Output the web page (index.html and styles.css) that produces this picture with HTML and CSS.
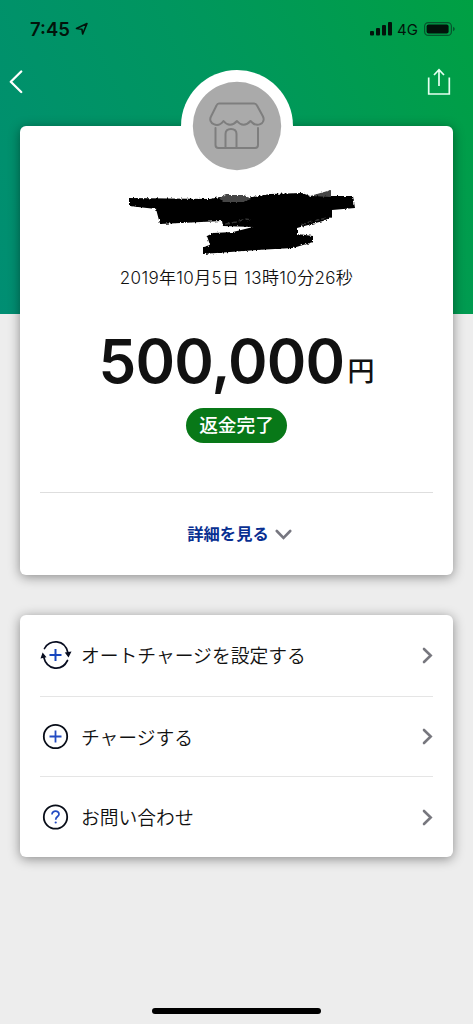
FILE: index.html
```html
<!DOCTYPE html>
<html lang="ja">
<head>
<meta charset="utf-8">
<title>取引詳細</title>
<link rel="stylesheet" href="styles.css">
</head>
<body>
<main class="page">
  <header class="status">
    <span class="time">7:45</span>
    <svg class="location" width="14" height="14" viewBox="0 0 14 14"><path d="M1.500 6.500 12 1.500 7.700 12 6.900 7.200Z" fill="none" stroke="#02140b" stroke-width="1.600" stroke-linejoin="round"/></svg>
    <svg class="signal" width="22" height="14" viewBox="0 0 22 14" fill="#02140b"><rect x="0" y="9" width="4" height="4.5" rx="1"/><rect x="6" y="6" width="4" height="7.5" rx="1"/><rect x="12" y="3" width="4" height="10.5" rx="1"/><rect x="18" y="0" width="4" height="13.5" rx="1"/></svg>
    <span class="network">4G</span>
    <svg class="battery" width="31" height="14" viewBox="0 0 31 14"><rect x=".6" y=".6" width="26.8" height="12.8" rx="3.7" fill="none" stroke="#06552d" stroke-width="1.2"/><rect x="2.6" y="2.6" width="22" height="8.8" rx="2" fill="#02140b"/><path d="M29 4.8q1.8.8 1.8 2.2T29 9.2Z" fill="#06552d"/></svg>
  </header>
  <nav class="nav">
    <svg width="14" height="24" viewBox="0 0 14 24"><path d="M12.2 1.5 1.8 11.8 12.2 22" fill="none" stroke="#fff" stroke-width="2.3" stroke-linecap="round" stroke-linejoin="round"/></svg>
    <svg width="24" height="28" viewBox="0 0 24 28"><path d="M1.7 9.5V26H22.3V9.5M12 18V2M7 7l5-5.3L17 7" fill="none" stroke="#e4fff0" stroke-width="1.7"/></svg>
  </nav>
  <section class="card receipt">
    <div class="avatar">
      <svg width="90" height="90" viewBox="0 0 90 90"><circle cx="45" cy="45" r="44.2" fill="#aaa"/><g fill="none" stroke="#7e7e7e" stroke-width="2" stroke-linejoin="round" stroke-linecap="round"><path d="M27 22.500H62q2 0 3 2l6 11c3 7-6 12-12.500 4.500-4.300 5-9.700 5-13.500 0-4.300 5-9.700 5-13.500 0C25.500 48 15.500 42 19 35.500L24.500 24.500q.800-2 2.500-2Z"/><path d="M23.500 47V64q0 3 3 3H63q3 0 3-3V47M33.500 67V53q0-5 5.500-5t5.500 5V67"/></g></svg>
    </div>
    <svg class="redaction" width="230" height="66" viewBox="0 0 230 66">
      <defs><filter id="brush" x="-5%" y="-10%" width="110%" height="120%"><feTurbulence type="fractalNoise" baseFrequency=".5" numOctaves="2" seed="4"/><feDisplacementMap in="SourceGraphic" scale="3" xChannelSelector="R" yChannelSelector="G"/></filter></defs>
      <g filter="url(#brush)" transform="translate(0 1)">
        <path d="M2 8 83 9 93 7 120 8 143 4 175 3 183 6 226 6 228 18 205 20 205 27 196 31 170 38 170 44 186 46 186 52 166 58 130 60 76 64 76 57 83 55 80 46 86 43 106 42 126 37 96 36 95 31 33 34 29 19 2 16Z" fill="#000"/>
        <path d="M183 6 204 0V7ZM92 8l7-3 18 0 7 4-8 3-20 0Z" fill="#444"/>
        <path d="M98 34l12-2 8-3 7 1M174 35l12-4 14-3" fill="none" stroke="#333" stroke-width="1.500" stroke-dasharray="5 2"/>
      </g>
    </svg>
    <p class="date">2019年10月5日 13時10分26秒</p>
    <p class="amount"><span class="digits">500,000</span><span class="yen">円</span></p>
    <span class="badge">返金完了</span>
    <a class="details"><span>詳細を見る</span><svg width="17" height="11" viewBox="0 0 17 11"><path d="M1.800 2 8.500 8.800 15.200 2" fill="none" stroke="#777780" stroke-width="2.600" stroke-linecap="round"/></svg></a>
  </section>
  <section class="card menu">
    <a class="row">
      <svg class="icon" width="32" height="30" viewBox="0 0 32 30"><g fill="none" stroke="#080d20" stroke-width="1.700" stroke-linecap="round"><path d="M4.500 8.500C9-.700 25-1.500 28 13M3.500 16.500C7 31 22 31.500 27.500 20.500"/></g><path d="M24.800 12.500 31.500 11.500 28.500 17.500ZM.500 18.500 2.600 12.500 6.500 17.200Z" fill="#080d20"/><path d="M15.500 9V21M9.500 15H21.500" stroke="#1746be" stroke-width="2"/></svg>
      <span class="label">オートチャージを設定する</span>
      <svg width="11" height="17" viewBox="0 0 11 17"><path d="M2 2 8.700 8.500 2 15" fill="none" stroke="#77777e" stroke-width="2.600" stroke-linecap="round"/></svg>
    </a>
    <a class="row">
      <svg class="icon" width="32" height="30" viewBox="0 0 32 30"><circle cx="15.500" cy="14.500" r="11.700" fill="none" stroke="#080d18" stroke-width="1.800"/><path d="M15.500 8.500V20.500M9.500 14.500H21.500" stroke="#234bc2" stroke-width="1.800"/></svg>
      <span class="label">チャージする</span>
      <svg width="11" height="17" viewBox="0 0 11 17"><path d="M2 2 8.700 8.500 2 15" fill="none" stroke="#77777e" stroke-width="2.600" stroke-linecap="round"/></svg>
    </a>
    <a class="row">
      <svg class="icon" width="32" height="30" viewBox="0 0 32 30"><circle cx="15.500" cy="15" r="11.700" fill="none" stroke="#080d18" stroke-width="1.800"/><path d="M12 12.500C12 8 19.200 8.300 19 12.300 18.900 14.600 15.700 14.500 15.700 17.700" fill="none" stroke="#234bc2" stroke-width="1.700"/><circle cx="15.700" cy="20.500" r="1.100" fill="#234bc2"/></svg>
      <span class="label">お問い合わせ</span>
      <svg width="11" height="17" viewBox="0 0 11 17"><path d="M2 2 8.700 8.500 2 15" fill="none" stroke="#77777e" stroke-width="2.600" stroke-linecap="round"/></svg>
    </a>
  </section>
  <div class="home-bar"></div>
</main>
</body>
</html>
```
FILE: styles.css
```css
* { box-sizing: border-box; }
body { margin: 0; }
p { margin: 0; }

.page {
  height: 1024px;
  padding: 0 20px;
  display: flex;
  flex-direction: column;
  background: linear-gradient(65deg, #008e73 0%, #00965f 50%, #00a043 100%) 0 0 / 100% 314px no-repeat #ededed;
  font-family: Inter, "Noto Sans CJK JP", sans-serif;
  color: #111;
  overflow: hidden;
}

.status {
  height: 58px;
  padding: 0 0 0 10px;
  margin-right: -2px;
  display: flex;
  align-items: center;
  color: #02140b;
}
.time { font-size: 18.5px; font-weight: 600; width: 45px; white-space: nowrap; }
.signal { margin-left: auto; }
.network { font-size: 15px; margin: 0 6px 0 5px; }

.nav {
  height: 68px;
  margin: 0 2px 0 -11px;
  padding-top: 10px;
  display: flex;
  justify-content: space-between;
  align-items: flex-start;
}
.nav svg:first-child { margin-top: 2px; }

.card {
  background: #fff;
  border-radius: 6px;
  box-shadow: 0 2px 12px rgba(0, 0, 0, .42);
  flex: none;
}

.receipt {
  height: 449px;
  padding: 0 20px;
  display: flex;
  flex-direction: column;
  align-items: center;
}
.avatar {
  width: 112px;
  height: 112px;
  margin-top: -56px;
  padding: 11px;
  border-radius: 50%;
  background: #fff;
  flex: none;
}
.avatar svg { display: block; }
.redaction { margin: 7px 0 0 11px; flex: none; overflow: visible; }
.date {
  margin-top: 10px;
  height: 26px;
  line-height: 26px;
  font-size: 17px;
  font-weight: 350;
  letter-spacing: .33px;
  white-space: nowrap;
}
.amount {
  margin-top: 31px;
  height: 78px;
  display: flex;
  align-items: baseline;
  line-height: 78px;
}
.digits { font-size: 60px; font-weight: 560; letter-spacing: -.8px; }
.yen {
  font-size: 27px;
  font-weight: 500;
  line-height: 30px;
  margin: 0 0 4px 3px;
  align-self: flex-end;
  padding-bottom: 9px;
}
.badge {
  margin-top: 8px;
  width: 101px;
  height: 35px;
  border-radius: 18px;
  background: #087818;
  color: #fff;
  font-size: 18.7px;
  font-weight: 500;
  line-height: 35px;
  text-align: center;
}
.details {
  align-self: stretch;
  margin-top: auto;
  height: 83px;
  padding-left: 6px;
  border-top: 1px solid #dedede;
  display: flex;
  justify-content: center;
  align-items: center;
  gap: 6px;
  font-size: 16.3px;
  font-weight: 700;
  color: #082f91;
}
.details span { padding-bottom: 2px; }

.menu { margin-top: 40px; height: 242px; padding: 0 20px; }
.row { height: 80.7px; display: flex; align-items: center; }
.row + .row { border-top: 1px solid #e5e5e5; }
.icon { margin-right: 9px; }
.label {
  flex: 1;
  padding-bottom: 1px;
  font-size: 18.8px;
  font-weight: 350;
  white-space: nowrap;
}

.home-bar {
  width: 169px;
  height: 6px;
  margin: auto auto 10px;
  border-radius: 3px;
  background: #000;
}
```
